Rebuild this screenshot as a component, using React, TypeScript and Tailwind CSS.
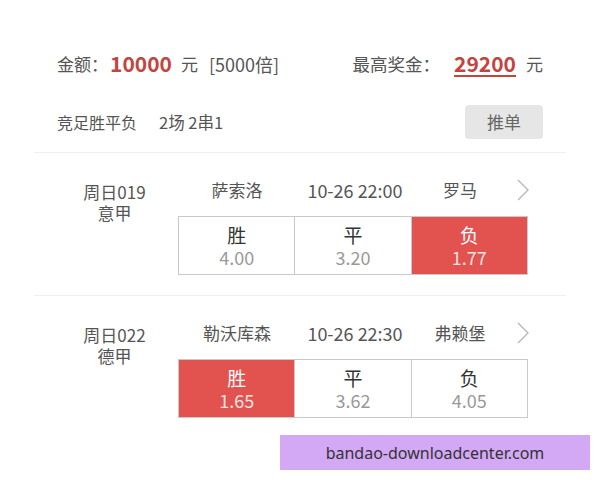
import React from 'react';

type Odd = { label: string; value: string; picked?: boolean };
type Match = { no: string; league: string; home: string; time: string; away: string; odds: Odd[] };

const MATCHES: Match[] = [
  {
    no: '周日019',
    league: '意甲',
    home: '萨索洛',
    time: '10-26 22:00',
    away: '罗马',
    odds: [
      { label: '胜', value: '4.00' },
      { label: '平', value: '3.20' },
      { label: '负', value: '1.77', picked: true },
    ],
  },
  {
    no: '周日022',
    league: '德甲',
    home: '勒沃库森',
    time: '10-26 22:30',
    away: '弗赖堡',
    odds: [
      { label: '胜', value: '1.65', picked: true },
      { label: '平', value: '3.62' },
      { label: '负', value: '4.05' },
    ],
  },
];

const Chevron = () => (
  <svg width="14" height="24" viewBox="0 0 14 24" fill="none" className="text-[#b5b5b5]">
    <polyline points="2,2 12,12 2,22" stroke="currentColor" strokeWidth="1.3" />
  </svg>
);

const MatchRow: React.FC<{ m: Match }> = ({ m }) => (
  <div className="flex pt-[26px]">
    <div className="w-[115px] pt-[2px] text-center text-[17px] leading-[22px] text-[#555]">
      <div>{m.no}</div>
      <div className="-mt-[1px]">{m.league}</div>
    </div>
    <div className="ml-[6px] w-[352px]">
      <div className="flex h-[22px] items-center text-[17px] text-[#555]">
        <div className="w-[118px] text-center">{m.home}</div>
        <div className="w-[118px] text-center text-[18px]">{m.time}</div>
        <div className="w-[92px] text-center">{m.away}</div>
        <div className="ml-[10px]">
          <Chevron />
        </div>
      </div>
      <div className="mt-[15px] flex h-[59px] w-[350px] border border-[#c9c9c9]">
        {m.odds.map((o, i) => (
          <div
            key={o.label}
            className={`flex flex-1 flex-col items-center justify-center ${i > 0 ? 'border-l border-[#c9c9c9]' : ''} ${o.picked ? 'bg-[#e2524f]' : 'bg-white'}`}
          >
            <div className={`text-[19px] leading-[23px] ${o.picked ? 'text-white' : 'text-[#333]'}`}>{o.label}</div>
            <div className={`text-[18px] leading-[22px] ${o.picked ? 'text-[#fbe3e2]' : 'text-[#999]'}`}>{o.value}</div>
          </div>
        ))}
      </div>
    </div>
  </div>
);

export default function App() {
  return (
    <div className="relative h-[480px] w-[600px] overflow-hidden bg-white font-['Noto_Sans_CJK_SC','Noto_Sans',sans-serif]">
      <div className="px-[57px] pt-[52px]">
        <div className="flex h-[24px] items-center justify-between text-[17px] text-[#555]">
          <div className="flex items-center">
            <span>金额：</span>
            <span className="ml-[2px] text-[21px] font-bold text-[#c4443f]">10000</span>
            <span className="ml-[9px]">元</span>
            <span className="ml-[11px] text-[18px]">[5000倍]</span>
          </div>
          <div className="flex items-center">
            <span className="text-[17.5px]">最高奖金：</span>
            <span className="ml-[14px] text-[21px] font-bold text-[#c4443f] underline underline-offset-[3px] decoration-[2px]">29200</span>
            <span className="ml-[10px]">元</span>
          </div>
        </div>
        <div className="mt-[29px] flex h-[34px] items-center justify-between text-[16px] text-[#555]">
          <div>
            <span>竞足胜平负</span>
            <span className="ml-[22px] text-[16.5px]">2场 2串1</span>
          </div>
          <button className="h-[34px] w-[78px] rounded-[4px] bg-[#e6e6e6] text-[17px] text-[#666]">推单</button>
        </div>
      </div>
      <div className="mx-[34px] mt-[13px] h-px bg-[#efefef]" />
      <div className="pl-[57px]">
        <MatchRow m={MATCHES[0]} />
      </div>
      <div className="mx-[34px] mt-[20px] h-px bg-[#efefef]" />
      <div className="pl-[57px]">
        <MatchRow m={MATCHES[1]} />
      </div>
      <div className="absolute left-[280px] top-[435px] flex h-[35px] w-[310px] items-center justify-center bg-[#d3a9f5] text-[16px] text-[#333] font-['Noto_Sans',sans-serif]">
        bandao-downloadcenter.com
      </div>
    </div>
  );
}
